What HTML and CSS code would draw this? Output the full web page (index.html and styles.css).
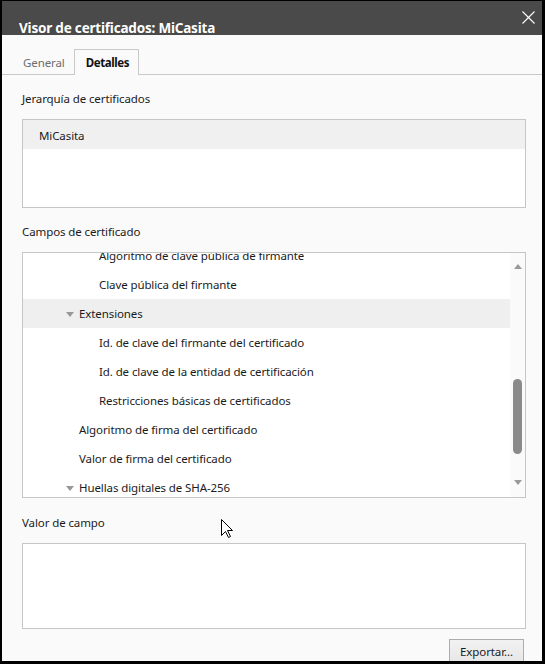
FILE: index.html
```html
<!DOCTYPE html>
<html lang="es">
<head>
<meta charset="utf-8">
<title>Visor de certificados: MiCasita</title>
<link rel="stylesheet" href="styles.css">
</head>
<body>
<div class="window">
  <div class="titlebar">
    <span class="title">Visor de certificados: MiCasita</span>
    <svg class="close" width="13" height="13" viewBox="0 0 13 13"><path d="M0.5 0.5 L12.5 12.5 M12.5 0.5 L0.5 12.5" stroke="#fff" stroke-width="1.1" fill="none"/></svg>
  </div>
  <div class="tabs">
    <div class="tab">General</div>
    <div class="tab active">Detalles</div>
  </div>
  <div class="content">
    <div class="label first">Jerarquía de certificados</div>
    <div class="box hier">
      <div class="hier-row">MiCasita</div>
    </div>

    <div class="label">Campos de certificado</div>
    <div class="box fields">
      <div class="tree-clip">
        <ul class="tree">
          <li class="row l3">Algoritmo de clave pública de firmante</li>
          <li class="row l3">Clave pública del firmante</li>
          <li class="row l2 sel"><span class="twisty"></span>Extensiones</li>
          <li class="row l3">Id. de clave del firmante del certificado</li>
          <li class="row l3">Id. de clave de la entidad de certificación</li>
          <li class="row l3">Restricciones básicas de certificados</li>
          <li class="row l2">Algoritmo de firma del certificado</li>
          <li class="row l2">Valor de firma del certificado</li>
          <li class="row l2"><span class="twisty"></span>Huellas digitales de SHA-256</li>
        </ul>
      </div>
      <div class="scrollbar">
        <span class="arrow up"></span>
        <span class="thumb"></span>
        <span class="arrow down"></span>
      </div>
    </div>

    <div class="label third">Valor de campo</div>
    <div class="box value"></div>

    <div class="actions">
      <button class="btn">Exportar...</button>
    </div>
  </div>
  <svg class="cursor" width="13" height="20" viewBox="0 0 13 20"><path d="M0.5 0.5 L0.5 16.5 L4.5 12.5 L7.5 18.5 L9.5 17.5 L6.5 11.5 L11.5 11.5 Z" fill="#fff" stroke="#000" stroke-width="1" stroke-linejoin="miter"/></svg>
</div>
</body>
</html>
```
FILE: styles.css
```css
html, body {
  margin: 0;
  padding: 0;
  background: #000;
}
body {
  width: 545px;
  height: 664px;
  overflow: hidden;
  font-family: "Noto Sans", "Open Sans", sans-serif;
  font-size: 11.5px;
  letter-spacing: -0.1px;
  color: #1b1b1b;
}
.window {
  position: relative;
  margin: 1px 3px 0 2px;
  height: 660px;
  background: #fafafa;
  overflow: hidden;
  display: flex;
  flex-direction: column;
}
.titlebar {
  height: 34px;
  background: #4a4a4a;
  position: relative;
  flex: none;
}
.title {
  position: absolute;
  left: 17px;
  top: 18px;
  line-height: 18px;
  color: #fff;
  font-weight: bold;
  font-size: 13.5px;
  letter-spacing: -0.2px;
}
.close {
  position: absolute;
  right: 7px;
  top: 10px;
}
.tabs {
  margin-top: 14px;
  height: 25px;
  display: flex;
  padding-left: 9px;
  border-bottom: 1px solid #c9c9c9;
  flex: none;
}
.tab {
  padding: 1px 8px 0 11px;
  line-height: 24px;
  color: #6d6d6d;
  border: 1px solid transparent;
  border-bottom: none;
}
.tab.active {
  color: #111;
  font-weight: bold;
  letter-spacing: -0.4px;
  border-color: #c9c9c9;
  background: #fafafa;
  margin-bottom: -1px;
  height: 24px;
  padding: 1px 9px 0 11px;
}
.content {
  padding: 0 16px 0 20px;
  display: flex;
  flex-direction: column;
}
.label {
  line-height: 16px;
  padding-top: 1px;
  margin-top: 15px;
  margin-bottom: 12px;
}
.label.first {
  padding-top: 0;
  margin-top: 16px;
  margin-bottom: 12px;
}
.label.third {
  padding-top: 1px;
  margin-top: 16px;
  margin-bottom: 12px;
}
.box {
  border: 1px solid #c6c6c6;
  background: #fff;
}
.hier {
  height: 87px;
}
.hier-row {
  height: 29px;
  line-height: 29px;
  padding-left: 16px;
  padding-top: 1px;
  box-sizing: border-box;
  background: #f0f0f0;
}
.fields {
  height: 244px;
  display: flex;
}
.tree-clip {
  flex: 1;
  overflow: hidden;
}
.tree {
  list-style: none;
  margin: -12px 0 0 0;
  padding: 0;
}
.row {
  height: 29px;
  box-sizing: border-box;
  padding-bottom: 0;
  line-height: 16px;
  white-space: nowrap;
  display: flex;
  align-items: center;
}
.row.l3 { padding-left: 76px; }
.row.l2 { padding-left: 56px; }
.row.sel { background: #efefef; }
.twisty {
  width: 0;
  height: 0;
  border-left: 4px solid transparent;
  border-right: 4px solid transparent;
  border-top: 5px solid #979797;
  margin-left: -13px;
  margin-right: 5px;
  margin-top: 1px;
}
.scrollbar {
  width: 15px;
  background: #fafafa;
  display: flex;
  flex-direction: column;
  align-items: center;
  flex: none;
}
.arrow {
  width: 0;
  height: 0;
  border-left: 4.5px solid transparent;
  border-right: 4.5px solid transparent;
}
.arrow.up {
  border-bottom: 5px solid #9a9a9a;
  margin-top: 11px;
}
.arrow.down {
  border-top: 5px solid #9a9a9a;
  margin-top: 26px;
}
.thumb {
  width: 9px;
  height: 75px;
  border-radius: 5px;
  background: #8a8a8a;
  margin-top: 110px;
}
.value {
  height: 84px;
}
.actions {
  display: flex;
  justify-content: flex-end;
  padding-top: 10px;
  padding-right: 2px;
}
.btn {
  font-family: inherit;
  font-size: 11.5px;
  letter-spacing: -0.1px;
  color: #1b1b1b;
  width: 75px;
  height: 25px;
  padding: 0;
  border: 1px solid #adadad;
  background: linear-gradient(#f2f2f2, #e6e6e6);
  border-radius: 0;
}
.cursor {
  position: absolute;
  left: 219px;
  top: 518px;
}
```
